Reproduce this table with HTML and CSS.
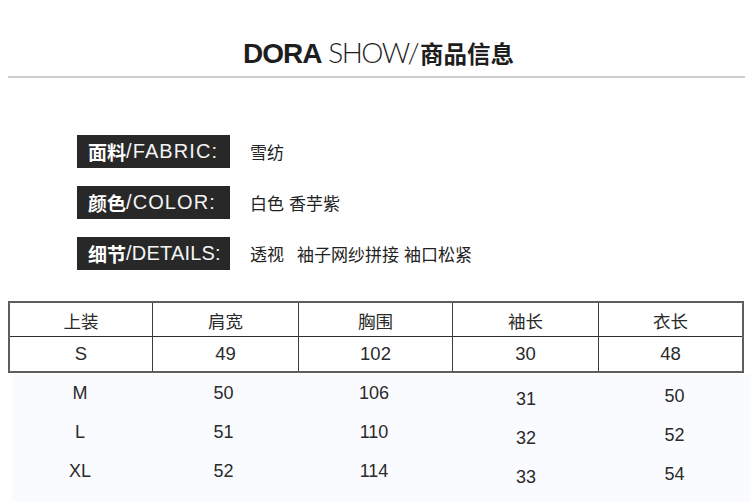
FILE: index.html
```html
<!DOCTYPE html>
<html lang="zh">
<head>
<meta charset="utf-8">
<title>DORA SHOW 商品信息</title>
<link rel="stylesheet" href="styles.css">
</head>
<body>
<header class="head">
  <h1 class="title"><span class="t-bold">DORA</span> <span class="t-light">SHOW/</span><span class="t-cjk">商品信息</span></h1>
</header>

<section class="specs">
  <div class="spec">
    <div class="label"><span class="l-cjk">面料</span><span class="l-en">/FABRIC:</span></div>
    <div class="value">雪纺</div>
  </div>
  <div class="spec">
    <div class="label"><span class="l-cjk">颜色</span><span class="l-en">/COLOR:</span></div>
    <div class="value">白色<span class="sp2"></span>香芋紫</div>
  </div>
  <div class="spec">
    <div class="label"><span class="l-cjk">细节</span><span class="l-en l-tight">/DETAILS:</span></div>
    <div class="value">透视<span class="sp1"></span>袖子网纱拼接<span class="sp2"></span>袖口松紧</div>
  </div>
</section>

<section class="sizes">
  <div class="grid">
    <div class="cell hd">上装</div>
    <div class="cell hd">肩宽</div>
    <div class="cell hd">胸围</div>
    <div class="cell hd">袖长</div>
    <div class="cell hd last">衣长</div>
    <div class="cell">S</div>
    <div class="cell">49</div>
    <div class="cell">102</div>
    <div class="cell">30</div>
    <div class="cell last">48</div>
  </div>
  <div class="rest">
    <div class="r">M</div><div class="r">50</div><div class="r">106</div><div class="r c4">31</div><div class="r c5">50</div>
    <div class="r">L</div><div class="r">51</div><div class="r">110</div><div class="r c4">32</div><div class="r c5">52</div>
    <div class="r">XL</div><div class="r">52</div><div class="r">114</div><div class="r c4">33</div><div class="r c5">54</div>
  </div>
</section>
</body>
</html>
```

FILE: styles.css
```css
* { box-sizing: border-box; }
html, body {
  margin: 0;
  padding: 0;
  background: #ffffff;
}
body {
  font-family: "Liberation Sans", Arial, "Noto Sans CJK SC", sans-serif;
  color: #222;
  width: 750px;
  height: 502px;
  overflow: hidden;
}

.head {
  margin: 0 5px 0 8px;
  height: 78px;
  padding-top: 36px;
  border-bottom: 2px solid #cdcdcd;
}
.title {
  margin: 0;
  text-align: center;
  line-height: 32px;
  height: 32px;
  font-weight: normal;
  color: #1e1e1e;
  padding-left: 4px;
}
.t-bold {
  font-family: "Liberation Sans", Arial, sans-serif;
  font-weight: 700;
  font-size: 28px;
  letter-spacing: -1px;
}
.t-light {
  font-family: Lato, "Liberation Sans", sans-serif;
  font-weight: 300;
  font-size: 28px;
  letter-spacing: -1.6px;
  margin-left: -2px;
}
.t-cjk {
  font-family: "Noto Sans CJK SC", sans-serif;
  font-weight: 700;
  font-size: 23.5px;
  margin-left: 2px;
}

.specs {
  margin-top: 57px;
  padding-left: 77px;
  display: flex;
  flex-direction: column;
  gap: 18px;
}
.spec {
  display: flex;
  align-items: center;
  gap: 20px;
}
.label {
  width: 153px;
  height: 33px;
  background: #282828;
  color: #fff;
  padding-left: 11px;
  display: flex;
  align-items: center;
  white-space: nowrap;
}
.l-cjk {
  font-family: "Noto Sans CJK SC", sans-serif;
  font-weight: 700;
  font-size: 19px;
}
.l-en {
  font-family: "Liberation Sans", Arial, sans-serif;
  font-size: 20px;
  letter-spacing: 1.1px;
  color: #f4f4f4;
}
.l-en.l-tight {
  letter-spacing: 0.2px;
}
.value {
  font-family: "Noto Sans CJK SC", sans-serif;
  font-size: 17px;
  color: #222;
  white-space: nowrap;
}
.sp1 { display: inline-block; width: 13px; }
.sp2 { display: inline-block; width: 5px; }

.sizes {
  margin-top: 31px;
}
.grid {
  margin-left: 8px;
  width: 736px;
  border: 2px solid #5e5e5e;
  display: grid;
  grid-template-columns: 143px 146px 154px 146px 1fr;
  grid-template-rows: 34px 34px;
}
.cell {
  display: flex;
  align-items: center;
  justify-content: center;
  border-right: 1px solid #3c3c3c;
  font-family: "Liberation Sans", Arial, "Noto Sans CJK SC", sans-serif;
  font-size: 18.5px;
  color: #2a2a2a;
}
.cell.last { border-right: 0; }
.cell.hd {
  border-bottom: 1px solid #2e2e2e;
  font-family: "Noto Sans CJK SC", sans-serif;
  font-size: 17.5px;
  padding-top: 2px;
}

.rest {
  margin-left: 12px;
  margin-top: 1px;
  height: 129px;
  background: #fafbfe;
  display: grid;
  grid-template-columns: 140px 147px 154px 146px 1fr;
  grid-auto-rows: 39px;
  width: 738px;
}
.r {
  display: flex;
  align-items: center;
  justify-content: center;
  font-family: "Liberation Sans", Arial, sans-serif;
  font-size: 18px;
  color: #2a2a2a;
  padding-right: 4px;
}
.r.c4 { padding-top: 12px; padding-right: 0; }
.r.c5 { padding-top: 6px; padding-right: 0; }
```
